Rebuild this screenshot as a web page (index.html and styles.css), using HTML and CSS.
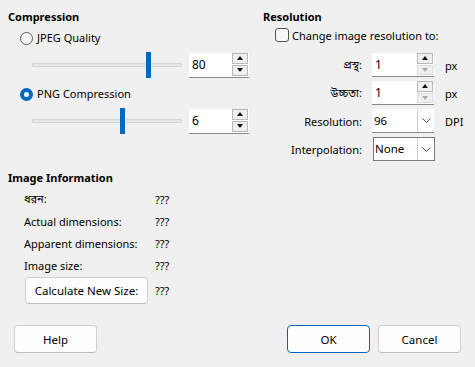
FILE: index.html
```html
<!DOCTYPE html>
<html>
<head>
<meta charset="utf-8">
<link rel="stylesheet" href="styles.css">
</head>
<body>
<div class="dialog">
  <div class="top">
    <section class="compression">
      <h2 class="heading">Compression</h2>
      <div class="radio-row"><span class="radio"></span><span>JPEG Quality</span></div>
      <div class="slider-row">
        <div class="slider"><div class="track"></div><div class="thumb" style="left:114px"></div></div>
        <div class="spin"><div class="spin-input">80</div><div class="spin-btns"><span class="sb up"></span><span class="sb down"></span></div></div>
      </div>
      <div class="radio-row second"><span class="radio checked"></span><span>PNG Compression</span></div>
      <div class="slider-row">
        <div class="slider"><div class="track"></div><div class="thumb" style="left:88px"></div></div>
        <div class="spin"><div class="spin-input">6</div><div class="spin-btns"><span class="sb up"></span><span class="sb down"></span></div></div>
      </div>
    </section>
    <section class="resolution">
      <h2 class="heading">Resolution</h2>
      <div class="check-row"><span class="checkbox"></span><span>Change image resolution to:</span></div>
      <div class="res-grid">
        <span class="lbl bn">প্রস্থ:</span>
        <div class="spin small"><div class="spin-input">1</div><div class="spin-btns"><span class="sb up"></span><span class="sb down dis"></span></div></div>
        <span class="unit">px</span>
        <span class="lbl bn">উচ্চতা:</span>
        <div class="spin small"><div class="spin-input">1</div><div class="spin-btns"><span class="sb up"></span><span class="sb down dis"></span></div></div>
        <span class="unit">px</span>
        <span class="lbl">Resolution:</span>
        <div class="combo"><div class="combo-input">96</div><div class="combo-btn"><svg width="9" height="5" viewBox="0 0 9 5"><path d="M0.5 0.5 L4.5 4.5 L8.5 0.5" fill="none" stroke="#555" stroke-width="1"/></svg></div></div>
        <span class="unit">DPI</span>
        <span class="lbl">Interpolation:</span>
        <div class="combo boxed"><div class="combo-input">None</div><div class="combo-btn"><svg width="9" height="5" viewBox="0 0 9 5"><path d="M0.5 0.5 L4.5 4.5 L8.5 0.5" fill="none" stroke="#555" stroke-width="1"/></svg></div></div>
        <span></span>
      </div>
    </section>
  </div>
  <section class="info">
    <h2 class="heading">Image Information</h2>
    <div class="info-grid">
      <span class="bn">ধরন:</span><span>???</span>
      <span>Actual dimensions:</span><span>???</span>
      <span>Apparent dimensions:</span><span>???</span>
      <span>Image size:</span><span>???</span>
    </div>
    <div class="calc-row"><button class="btn calc">Calculate New Size:</button><span>???</span></div>
  </section>
  <div class="footer">
    <button class="btn">Help</button>
    <div class="right-btns">
      <button class="btn default">OK</button>
      <button class="btn">Cancel</button>
    </div>
  </div>
</div>
</body>
</html>
```
FILE: styles.css
```css
* { box-sizing: border-box; }
html, body { margin: 0; padding: 0; }
body {
  background: #f0f0f0;
  font-family: "Noto Sans", "Noto Sans Bengali", "Open Sans", sans-serif;
  font-size: 11px;
  color: #000;
  width: 475px;
  height: 367px;
  overflow: hidden;
}
.dialog {
  width: 475px;
  height: 367px;
  display: flex;
  flex-direction: column;
}
.top { display: flex; }
.heading {
  margin: 9px 0 0 0;
  font-size: 11px;
  font-weight: 700;
  line-height: 16px;
  height: 16px;
}
.compression { width: 255px; padding-left: 8px; }
.resolution { padding-left: 8px; flex: 1; }

.radio-row {
  display: flex;
  align-items: center;
  height: 16px;
  margin-top: 5px;
  padding-left: 12px;
  gap: 4px;
  line-height: 16px;
}
.radio-row.second { margin-top: 8px; }
.radio {
  width: 13px; height: 13px;
  border-radius: 50%;
  border: 1px solid #5c5c5c;
  background: #f6f6f6;
  flex: none;
}
.radio.checked {
  border: 4px solid #0067c0;
  background: #fff;
}
.slider-row {
  display: flex;
  align-items: center;
  height: 26px;
  margin-top: 6px;
  padding-left: 24px;
}
.slider {
  position: relative;
  width: 150px;
  height: 26px;
  margin-right: 7px;
}
.track {
  position: absolute;
  left: 0; right: 0; top: 11px;
  height: 4px;
  background: #e6e6e6;
  border: 1px solid #d6d6d6;
  border-radius: 1px;
}
.thumb {
  position: absolute;
  top: 0;
  width: 5px;
  height: 26px;
  background: #0067c0;
}
.spin {
  display: flex;
  width: 60px;
  height: 25px;
  border-bottom: 1px solid #8a8a8a;
}
.spin-input {
  flex: 1;
  background: #fff;
  line-height: 24px;
  padding-left: 3px;
  font-size: 12px;
}
.spin-btns {
  width: 17px;
  display: flex;
  flex-direction: column;
  background: #fff;
  padding: 0 1px 1px 0;
  gap: 1px;
}
.sb {
  flex: 1;
  background: #f0f0f0;
  border: 1px solid #b8b8b8;
  display: flex;
  align-items: center;
  justify-content: center;
}
.sb.up::after, .sb.down::after {
  content: "";
  width: 0; height: 0;
  border-left: 3.5px solid transparent;
  border-right: 3.5px solid transparent;
}
.sb.up::after { border-bottom: 4px solid #111; }
.sb.down::after { border-top: 4px solid #111; }
.sb.dis::after { border-top-color: #a8a8a8; }
.sb.dis { border-color: #dadada; }

.check-row {
  display: flex;
  align-items: center;
  height: 16px;
  margin-top: 2px;
  padding-left: 12px;
  gap: 3px;
}
.checkbox {
  width: 14px; height: 14px;
  border: 1px solid #555;
  border-radius: 3px;
  background: #f7f7f7;
}
.res-grid {
  display: grid;
  grid-template-columns: 99px 62px auto;
  grid-auto-rows: 24px;
  column-gap: 10px;
  row-gap: 4px;
  margin-top: 10px;
  align-items: center;
}
.lbl { text-align: right; }
.unit { padding-left: 1px; }
.spin.small { width: 62px; height: 24px; }
.combo {
  display: flex;
  width: 62px;
  height: 24px;
  background: #fff;
  border-bottom: 1px solid #8a8a8a;
}
.combo-input { flex: 1; line-height: 23px; padding-left: 2px; font-size: 11.5px; }
.combo-btn {
  width: 17px;
  border-left: 1px solid #d0d0d0;
  display: flex; align-items: center; justify-content: center;
}
.combo.boxed {
  border: 1px solid #7a7a7a;
  margin-left: 1px;
}
.combo.boxed .combo-input { padding-left: 1px; line-height: 22px; }

.info { padding-left: 8px; margin-top: 0; }
.info .heading { margin-top: 9px; }
.info-grid {
  display: grid;
  grid-template-columns: 131px auto;
  grid-auto-rows: 22px;
  align-items: center;
  padding-left: 16px;
  margin-top: 2px;
}
.calc-row {
  display: flex;
  align-items: center;
  gap: 7px;
  padding-left: 17px;
  margin-top: 1px;
}
.btn {
  font-family: inherit;
  font-size: 11.5px;
  color: #000;
  background: #fdfdfd;
  border: 1px solid #d0d0d0;
  border-bottom-color: #bdbdbd;
  border-radius: 4px;
  height: 28px;
  width: 83px;
  padding: 0;
}
.btn.calc { width: 123px; height: 27px; }
.btn.default { border: 1px solid #0067c0; }
.footer {
  display: flex;
  justify-content: space-between;
  align-items: center;
  margin-top: auto;
  padding: 0 14px 14px 14px;
}
.right-btns { display: flex; gap: 8px; }
```
